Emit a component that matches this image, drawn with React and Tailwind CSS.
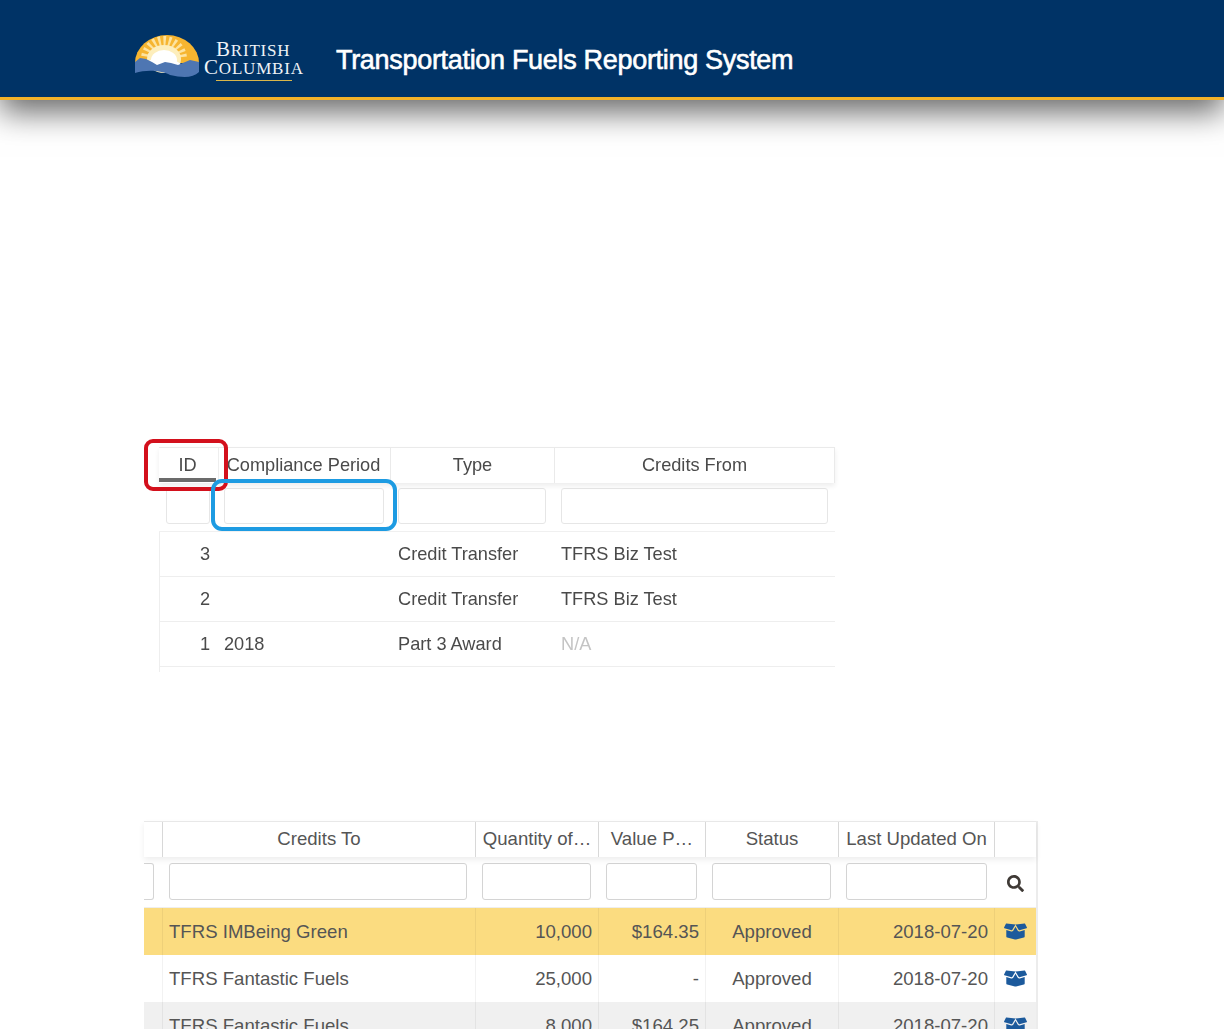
import { FaBoxOpen, FaSearch } from 'react-icons/fa'

function Logo() {
  const rays = [-78, -62, -46, -30, -14, 2, 18, 34, 50, 66, 80]
  return (
    <div className="flex items-start">
      <svg width="68" height="46" viewBox="0 0 68 46" className="mt-[2px]">
        <path d="M2 28 A32 28 0 0 1 66 28 Z" fill="#f6b530" />
        {rays.map((a) => (
          <path key={a} d="M31 24 L29.5 1 L32.5 1 Z" fill="#fde3a0" transform={`rotate(${a} 31 24)`} />
        ))}
        <ellipse cx="31" cy="24" rx="17" ry="14" fill="#fdeebc" />
        <ellipse cx="31" cy="25" rx="13" ry="10" fill="#fff" />
        <path d="M14 27 L21 23 L30 25 L38 23 L48 29 L48 34 L14 34 Z" fill="#fff" />
        <path d="M2 27 L7 23 L13 24 L19 27 L24 30 L32 27 L38 28 L45 30 L57 25 L66 27 L66 37 C60 43 50 43 37 40 C30 36 15 34 2 38 Z" fill="#4e76b2" />
      </svg>
      <div className="ml-[3px] mt-[8px] w-[100px] font-['Liberation_Serif',serif] text-[17px] leading-[17px] tracking-[0.8px] text-[#eef2f7]">
        <div className="pl-[12px]"><span className="text-[21px]">B</span>RITISH</div>
        <div><span className="text-[21px]">C</span>OLUMBIA</div>
        <div className="ml-[12px] mt-[3px] h-[1px] w-[76px] bg-[#d8b64a]" />
      </div>
    </div>
  )
}

function Header() {
  return (
    <header className="relative z-10 h-[100px] bg-[#003366] border-b-[3px] border-[#f3b229] shadow-[0_12px_30px_rgba(0,0,0,0.6)]">
      <div className="flex h-full pl-[133px] pt-[33px]">
        <Logo />
        <h1 className="ml-[32px] mt-[9px] font-['Liberation_Sans',sans-serif] text-[27px] leading-[36px] font-normal tracking-[-0.31px] text-white [-webkit-text-stroke:0.6px_white]">
          Transportation Fuels Reporting System
        </h1>
      </div>
    </header>
  )
}

function FilterInput({ className }) {
  return <div className={`rounded-[3px] border bg-white ${className}`} />
}

const topCols = 'grid grid-cols-[59px_172px_164px_281px]'
const bottomCols = 'grid grid-cols-[18px_313px_123px_107px_133px_156px_43px]'

function TopTable() {
  const rows = [
    ['3', '', 'Credit Transfer', 'TFRS Biz Test'],
    ['2', '', 'Credit Transfer', 'TFRS Biz Test'],
    ['1', '2018', 'Part 3 Award', 'N/A'],
  ]
  return (
    <div className="relative ml-[159px] mt-[347px] h-[225px] w-[676px] overflow-visible font-['Liberation_Sans',sans-serif] text-[18.2px] text-[#4a4a4a] blur-[0.3px]">
      <div className={`${topCols} relative h-[36px] border-t border-[#eaeaea] shadow-[0_3px_5px_rgba(0,0,0,0.07)]`}>
        <div className="relative flex items-center justify-center pr-[2px]">
          ID
          <span className="absolute bottom-[1px] left-0 h-[4px] w-[57px] bg-[#6b6b6b]" />
        </div>
        <div className="flex items-center justify-center whitespace-nowrap border-l border-[#eee] pr-[2px]">Compliance Period</div>
        <div className="flex items-center justify-center border-l border-[#eaeaea]">Type</div>
        <div className="flex items-center justify-center border-l border-r border-[#eaeaea]">Credits From</div>
      </div>
      <div className={`${topCols} h-[49px] border-b border-[#f0f0f0]`}>
        <div className="pl-[7px] pr-[8px] pt-[5px]"><FilterInput className="h-[36px] border-[#e6e6e6]" /></div>
        <div className="pl-[6px] pr-[6px] pt-[5px]"><FilterInput className="h-[36px] border-[#e6e6e6]" /></div>
        <div className="pl-[8px] pr-[8px] pt-[5px]"><FilterInput className="h-[36px] border-[#e6e6e6]" /></div>
        <div className="pl-[7px] pr-[7px] pt-[5px]"><FilterInput className="h-[36px] border-[#e6e6e6]" /></div>
      </div>
      {rows.map((r) => (
        <div key={r[0]} className={`${topCols} h-[45px] items-center border-b border-l border-[#eeeeee] pt-[2px]`}>
          <div className="pr-[9px] text-right">{r[0]}</div>
          <div className="pl-[5px]">{r[1]}</div>
          <div className="pl-[7px]">{r[2]}</div>
          <div className={r[3] === 'N/A' ? 'pl-[6px] text-[#c4c4c4]' : 'pl-[6px]'}>{r[3]}</div>
        </div>
      ))}
      <div className="h-[5px] border-l border-[#eeeeee]" />
      <div className="absolute left-[-15px] top-[-8px] h-[52px] w-[84px] rounded-[9px] border-[4px] border-[#d3101c]" />
      <div className="absolute left-[52px] top-[32px] h-[52px] w-[186px] rounded-[11px] border-[4px] border-[#1d9be2]" />
    </div>
  )
}

function DataRow({ to, qty, value, className }) {
  return (
    <div className={`${bottomCols} h-[47px] items-center text-[18.6px] text-[#555] ${className}`}>
      <div className="h-full" />
      <div className="flex h-full items-center border-l border-black/5 pl-[6px]">{to}</div>
      <div className="flex h-full items-center justify-end border-l border-black/5 pr-[6px]">{qty}</div>
      <div className="flex h-full items-center justify-end border-l border-black/5 pr-[6px]">{value}</div>
      <div className="flex h-full items-center justify-center border-l border-black/5">Approved</div>
      <div className="flex h-full items-center justify-end border-l border-black/5 pr-[6px]">2018-07-20</div>
      <div className="flex h-full items-center justify-center border-l border-black/5 pr-[2px] text-[#1c5a9c]">
        <FaBoxOpen size={23} />
      </div>
    </div>
  )
}

function BottomTable() {
  return (
    <div className="ml-[144px] mt-[149px] w-[894px] border-r-[2px] border-[#ececec] font-['Liberation_Sans',sans-serif]">
      <div className={`${bottomCols} relative h-[36px] border-t border-[#e8e8e8] text-[18.6px] text-[#555] shadow-[0_3px_6px_rgba(0,0,0,0.07)]`}>
        <div />
        <div className="flex items-center justify-center border-l border-[#d8d8d8] pb-[1px]">Credits To</div>
        <div className="flex items-center justify-center whitespace-nowrap border-l border-[#d8d8d8] pb-[1px]">Quantity of…</div>
        <div className="flex items-center justify-center whitespace-nowrap border-l border-[#d8d8d8] pb-[1px]">Value P…</div>
        <div className="flex items-center justify-center border-l border-[#d8d8d8] pb-[1px]">Status</div>
        <div className="flex items-center justify-center whitespace-nowrap border-l border-[#d8d8d8] pb-[1px]">Last Updated On</div>
        <div className="border-l border-[#d8d8d8]" />
      </div>
      <div className={`${bottomCols} h-[51px] border-b border-[#eee]`}>
        <div className="pr-[8px] pt-[6px]"><FilterInput className="h-[37px] rounded-l-none border-l-0 border-[#d4d4d4]" /></div>
        <div className="pl-[7px] pr-[8px] pt-[6px]"><FilterInput className="h-[37px] border-[#d4d4d4]" /></div>
        <div className="pl-[7px] pr-[7px] pt-[6px]"><FilterInput className="h-[37px] border-[#d4d4d4]" /></div>
        <div className="pl-[8px] pr-[8px] pt-[6px]"><FilterInput className="h-[37px] border-[#d4d4d4]" /></div>
        <div className="pl-[7px] pr-[7px] pt-[6px]"><FilterInput className="h-[37px] border-[#d4d4d4]" /></div>
        <div className="pl-[8px] pr-[7px] pt-[6px]"><FilterInput className="h-[37px] border-[#d4d4d4]" /></div>
        <div className="flex items-center justify-center pt-[2px] text-[#3f3a36]"><FaSearch size={17} /></div>
      </div>
      <DataRow to="TFRS IMBeing Green" qty="10,000" value="$164.35" className="bg-[#fbdc80]" />
      <DataRow to="TFRS Fantastic Fuels" qty="25,000" value="-" className="bg-white" />
      <DataRow to="TFRS Fantastic Fuels" qty="8,000" value="$164.25" className="bg-[#f0f0f0]" />
    </div>
  )
}

export default function App() {
  return (
    <div className="h-[1029px] overflow-hidden bg-white">
      <Header />
      <TopTable />
      <BottomTable />
    </div>
  )
}
